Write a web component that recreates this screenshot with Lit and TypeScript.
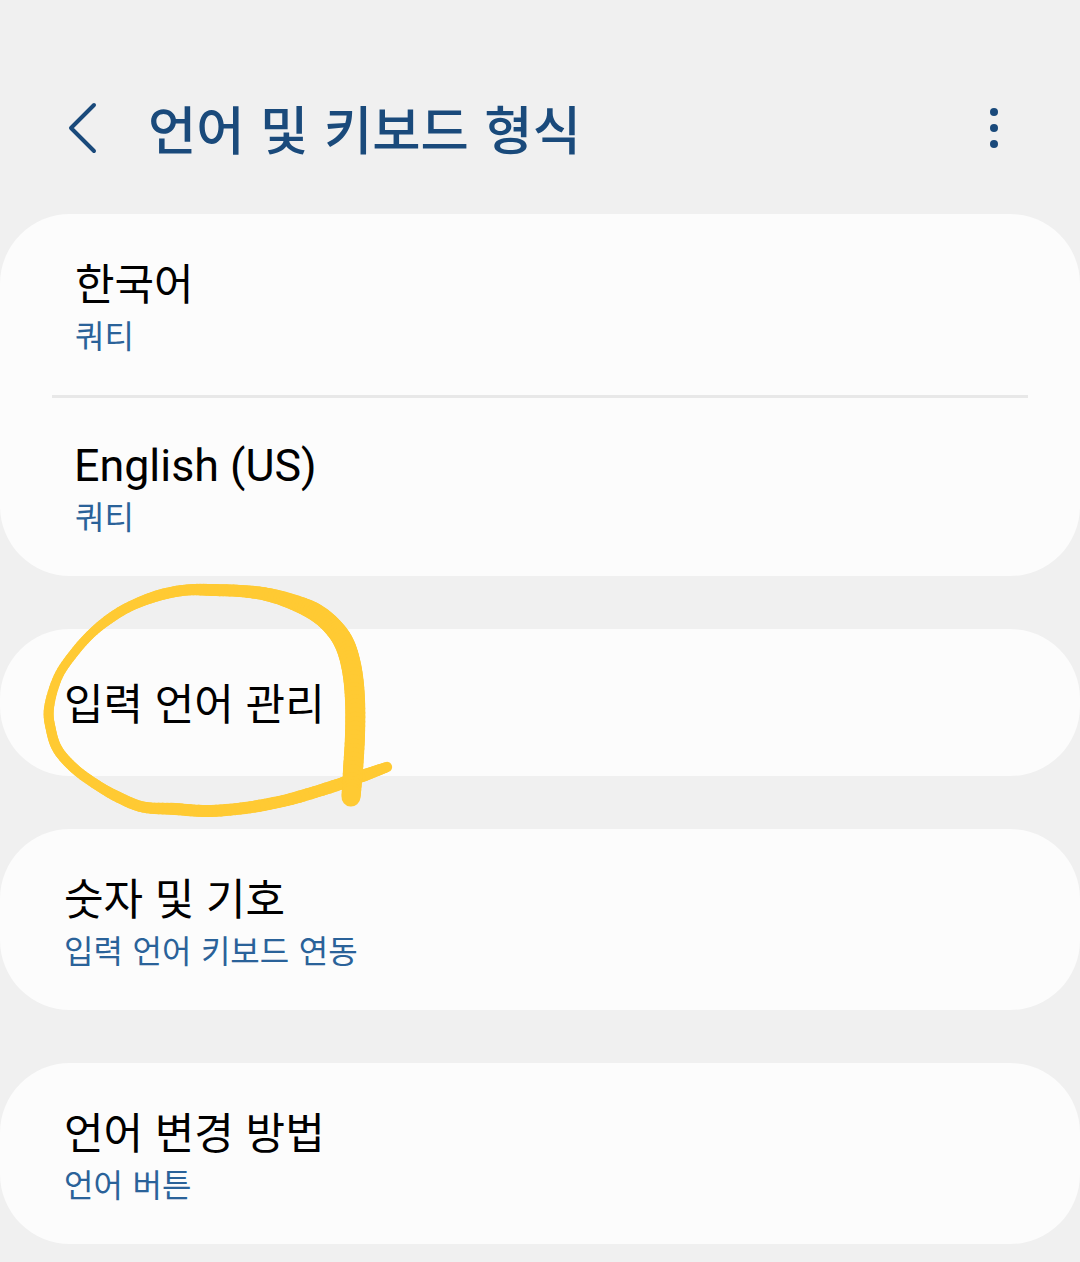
import { LitElement, html, css, svg } from "lit";
import { customElement } from "lit/decorators.js";

type Row = { title: string; sub?: string; inset?: boolean; latin?: boolean };

const cards: Row[][] = [
  [
    { title: "한국어", sub: "쿼티", inset: true },
    { title: "English (US)", sub: "쿼티", inset: true, latin: true },
  ],
  [{ title: "입력 언어 관리" }],
  [{ title: "숫자 및 기호", sub: "입력 언어 키보드 연동" }],
  [{ title: "언어 변경 방법", sub: "언어 버튼" }],
];

// hand drawn marker: x, y, stroke width
const stroke: number[][] = [
  [387, 767, 10], [365, 775, 12], [343, 783, 12], [315, 792, 12], [283, 801, 12],
  [245, 808, 12], [207, 811, 12], [175, 809, 12], [143, 807, 11], [118, 797, 11],
  [97, 785, 10], [75, 769, 10], [58, 750, 10], [51, 730, 10], [49, 708, 10],
  [58, 677, 9], [74, 653, 9], [92, 633, 9], [112, 617, 10], [133, 605, 10],
  [160, 595, 11], [187, 590, 11], [213, 590, 12], [240, 591, 12], [265, 594, 13],
  [290, 601, 15], [315, 612, 18], [333, 627, 19], [345, 645, 20], [352, 670, 20],
  [355, 700, 20], [355, 735, 20], [353, 770, 20], [351, 797, 19],
];

function sample(pts: number[][]) {
  const out: number[][] = [];
  for (let i = 0; i < pts.length - 1; i++) {
    const p0 = pts[Math.max(i - 1, 0)];
    const p1 = pts[i];
    const p2 = pts[i + 1];
    const p3 = pts[Math.min(i + 2, pts.length - 1)];
    for (let t = 0; t < 1; t += 0.125) {
      const c = (k: number) =>
        0.5 * (2 * p1[k] + (p2[k] - p0[k]) * t +
          (2 * p0[k] - 5 * p1[k] + 4 * p2[k] - p3[k]) * t * t +
          (3 * p1[k] - p0[k] - 3 * p2[k] + p3[k]) * t * t * t);
      out.push([c(0), c(1), p1[2] + (p2[2] - p1[2]) * t]);
    }
  }
  out.push(pts[pts.length - 1]);
  return out;
}

@customElement("app-root")
export class AppRoot extends LitElement {
  static styles = css`
    :host {
      display: block;
      position: relative;
      height: 1262px;
      overflow: hidden;
      background: #f0f0f0;
      font-family: "Roboto", "Noto Sans CJK KR", sans-serif;
      color: #000;
    }
    .bar {
      height: 214px;
      box-sizing: border-box;
      display: flex;
      align-items: center;
      padding: 42px 78px 0 68px;
      color: #1a4a7b;
    }
    .back { width: 30px; height: 52px; margin-right: 50px; }
    h1 {
      flex: 1;
      margin: -2px 0 0;
      font-family: "Noto Sans CJK KR", sans-serif;
      font-size: 52.5px;
      word-spacing: 3.7px;
      font-weight: 500;
      line-height: 60px;
    }
    .more { width: 16px; height: 44px; }
    .card {
      background: #fcfcfc;
      border-radius: 70px;
      margin-bottom: 53px;
    }
    .row {
      box-sizing: border-box;
      padding: 48px 64px 0;
      height: 147px;
    }
    .row.sub { height: 181px; padding-top: 43px; }
    .row.inset { padding-left: 75px; }
    .title {
      font-size: 43px;
      word-spacing: 1px;
      line-height: 56px;
    }
    .title.latin { font-size: 44.8px; word-spacing: 0; margin-left: -1px; }
    .sub-text {
      font-family: "Noto Sans CJK KR", sans-serif;
      font-size: 32px;
      word-spacing: 2.4px;
      line-height: 42px;
      color: #2a6299;
    }
    hr {
      margin: 0 52px -3px;
      border: 0;
      height: 3px;
      background: #e8e8e8;
      position: relative;
    }
    .marker {
      position: absolute;
      left: 0;
      top: 0;
      width: 1080px;
      height: 1262px;
      pointer-events: none;
    }
  `;

  renderRow(r: Row) {
    const cls = ["row", r.sub ? "sub" : "", r.inset ? "inset" : ""].join(" ");
    return html`<div class=${cls}>
      <div class="title ${r.latin ? "latin" : ""}">${r.title}</div>
      ${r.sub ? html`<div class="sub-text">${r.sub}</div>` : null}
    </div>`;
  }

  render() {
    const pts = sample(stroke);
    return html`
      <div class="bar">
        <svg class="back" viewBox="0 0 30 52" fill="none" stroke="currentColor" stroke-width="4" stroke-linecap="round" stroke-linejoin="round">
          <path d="M26 3 L3 26 L26 49" />
        </svg>
        <h1>언어 및 키보드 형식</h1>
        <svg class="more" viewBox="0 0 16 44" fill="currentColor">
          <circle cx="8" cy="6" r="4" /><circle cx="8" cy="22" r="4" /><circle cx="8" cy="38" r="4" />
        </svg>
      </div>
      ${cards.map(
        (c) => html`<div class="card">
          ${c.map((r, i) => html`${i ? html`<hr />` : null}${this.renderRow(r)}`)}
        </div>`
      )}
      <svg class="marker" viewBox="0 0 1080 1262" fill="none" stroke="#ffca33" stroke-linecap="round">
        ${pts.slice(1).map(
          (p, i) => svg`<line x1=${pts[i][0]} y1=${pts[i][1]} x2=${p[0]} y2=${p[1]} stroke-width=${p[2]} />`
        )}
      </svg>
    `;
  }
}
